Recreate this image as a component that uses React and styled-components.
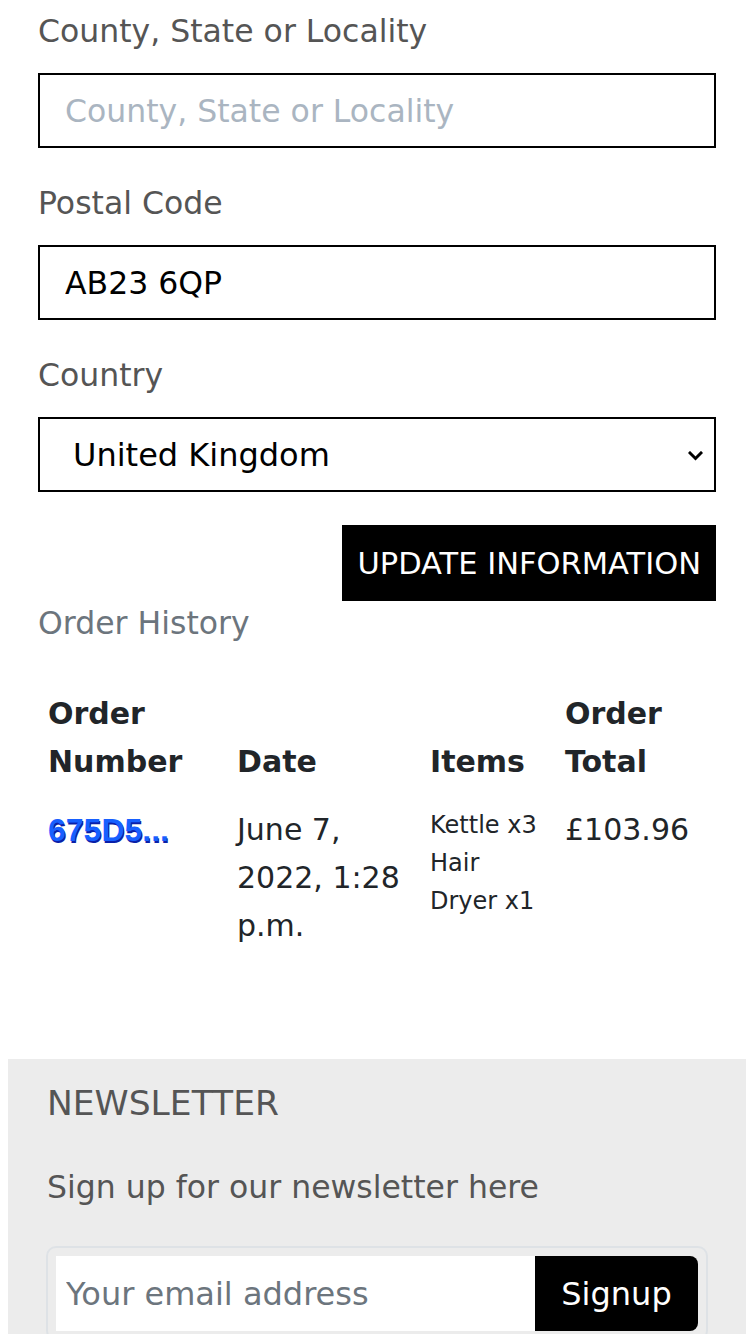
import React from 'react';
import styled, { createGlobalStyle } from 'styled-components';

const GlobalStyle = createGlobalStyle`
  body {
    margin: 0;
    background: #fff;
    font-family: "DejaVu Sans", "Open Sans", sans-serif;
    color: #212529;
  }
  * { box-sizing: border-box; }
`;

const Page = styled.div`
  width: 750px;
  overflow: hidden;
`;

const Account = styled.section`
  padding: 9px 34px 0 38px;
`;

const Field = styled.div`
  margin-bottom: 33px;
`;

const Label = styled.label`
  display: block;
  font-size: 31.5px;
  line-height: 45px;
  color: #555;
  margin-bottom: 19px;
`;

const TextInput = styled.input`
  display: block;
  width: 100%;
  height: 75px;
  border: 2px solid #000;
  border-radius: 0;
  padding: 0 25px;
  font-family: inherit;
  font-size: 31.5px;
  color: #000;
  outline: none;

  &::placeholder {
    color: #aab5c1;
  }
`;

const SelectWrap = styled.div`
  position: relative;
`;

const Select = styled.select`
  display: block;
  width: 100%;
  height: 75px;
  border: 2px solid #000;
  border-radius: 0;
  padding: 0 50px 0 33px;
  font-family: inherit;
  font-size: 32px;
  color: #000;
  background: #fff;
  appearance: none;
  -webkit-appearance: none;
`;

const Chevron = styled.svg`
  position: absolute;
  right: 13px;
  top: 50%;
  width: 15px;
  height: 10px;
  margin-top: -4px;
  pointer-events: none;
`;

const Actions = styled.div`
  display: flex;
  justify-content: flex-end;
`;

const UpdateButton = styled.button`
  height: 76px;
  padding: 0 15px;
  border: none;
  background: #000;
  color: #fff;
  font-family: inherit;
  font-size: 30.5px;
  text-transform: uppercase;
  cursor: pointer;
`;

const SectionTitle = styled.h2`
  margin: 0 0 36px;
  font-size: 31.5px;
  line-height: 45px;
  font-weight: 400;
  color: #6c757d;
`;

const OrdersTable = styled.table`
  width: 100%;
  border-collapse: collapse;
  table-layout: fixed;
`;

const HeadCell = styled.th`
  padding: 8px 10px;
  text-align: left;
  vertical-align: bottom;
  font-size: 30px;
  line-height: 48px;
  font-weight: 700;
  color: #212529;
`;

const Cell = styled.td`
  padding: 12px 10px;
  vertical-align: top;
  font-size: ${(p) => (p.$small ? '24px' : '30px')};
  line-height: ${(p) => (p.$small ? '38px' : '48px')};
  color: #212529;
`;

const OrderLink = styled.a`
  color: #1760ff;
  font-family: "Liberation Sans", Arial, sans-serif;
  font-size: 32px;
  font-weight: 700;
  text-decoration: none;
  text-shadow: 1px 2px 0 #0a1fa8;
`;

const Newsletter = styled.footer`
  margin: 97px 4px 0 8px;
  padding: 20px 38px 0;
  background: #ececec;
`;

const NewsTitle = styled.h3`
  margin: 0 0 38px;
  padding-left: 1px;
  font-size: 34.5px;
  line-height: 48px;
  font-weight: 400;
  text-transform: uppercase;
  color: #555;
`;

const NewsText = styled.p`
  margin: 0 0 36px;
  padding-left: 1px;
  font-size: 31.5px;
  line-height: 45px;
  color: #555;
`;

const SignupGroup = styled.form`
  display: flex;
  padding: 8px;
  border: 2px solid #dee2e6;
  border-radius: 10px;
`;

const EmailInput = styled.input`
  flex: 1;
  min-width: 0;
  height: 75px;
  border: none;
  padding: 0 10px;
  font-family: inherit;
  font-size: 32px;
  background: #fff;
  outline: none;

  &::placeholder {
    color: #6c757d;
  }
`;

const SignupButton = styled.button`
  width: 163px;
  height: 75px;
  border: none;
  border-radius: 0 8px 8px 0;
  background: #000;
  color: #fff;
  font-family: inherit;
  font-size: 32px;
  cursor: pointer;
`;

export default function App() {
  return (
    <Page>
      <GlobalStyle />
      <Account>
        <Field>
          <Label htmlFor="county">County, State or Locality</Label>
          <TextInput id="county" placeholder="County, State or Locality" />
        </Field>
        <Field>
          <Label htmlFor="postcode">Postal Code</Label>
          <TextInput id="postcode" defaultValue="AB23 6QP" />
        </Field>
        <Field>
          <Label htmlFor="country">Country</Label>
          <SelectWrap>
            <Select id="country" defaultValue="GB">
              <option value="GB">United Kingdom</option>
              <option value="IE">Ireland</option>
            </Select>
            <Chevron viewBox="0 0 15 10" aria-hidden="true">
              <path d="M2 2l5.5 5.5L13 2" fill="none" stroke="#000" strokeWidth="3" strokeLinecap="square" />
            </Chevron>
          </SelectWrap>
        </Field>
        <Actions>
          <UpdateButton type="button">Update Information</UpdateButton>
        </Actions>
        <SectionTitle>Order History</SectionTitle>
        <OrdersTable>
          <colgroup>
            <col style={{ width: '189px' }} />
            <col style={{ width: '193px' }} />
            <col style={{ width: '135px' }} />
            <col />
          </colgroup>
          <thead>
            <tr>
              <HeadCell>Order Number</HeadCell>
              <HeadCell>Date</HeadCell>
              <HeadCell>Items</HeadCell>
              <HeadCell>Order Total</HeadCell>
            </tr>
          </thead>
          <tbody>
            <tr>
              <Cell>
                <OrderLink href="#order">675D5...</OrderLink>
              </Cell>
              <Cell>June 7, 2022, 1:28 p.m.</Cell>
              <Cell $small>
                Kettle x3
                <br />
                Hair Dryer x1
              </Cell>
              <Cell>£103.96</Cell>
            </tr>
          </tbody>
        </OrdersTable>
      </Account>
      <Newsletter>
        <NewsTitle>Newsletter</NewsTitle>
        <NewsText>Sign up for our newsletter here</NewsText>
        <SignupGroup onSubmit={(e) => e.preventDefault()}>
          <EmailInput type="email" placeholder="Your email address" />
          <SignupButton type="submit">Signup</SignupButton>
        </SignupGroup>
      </Newsletter>
    </Page>
  );
}
